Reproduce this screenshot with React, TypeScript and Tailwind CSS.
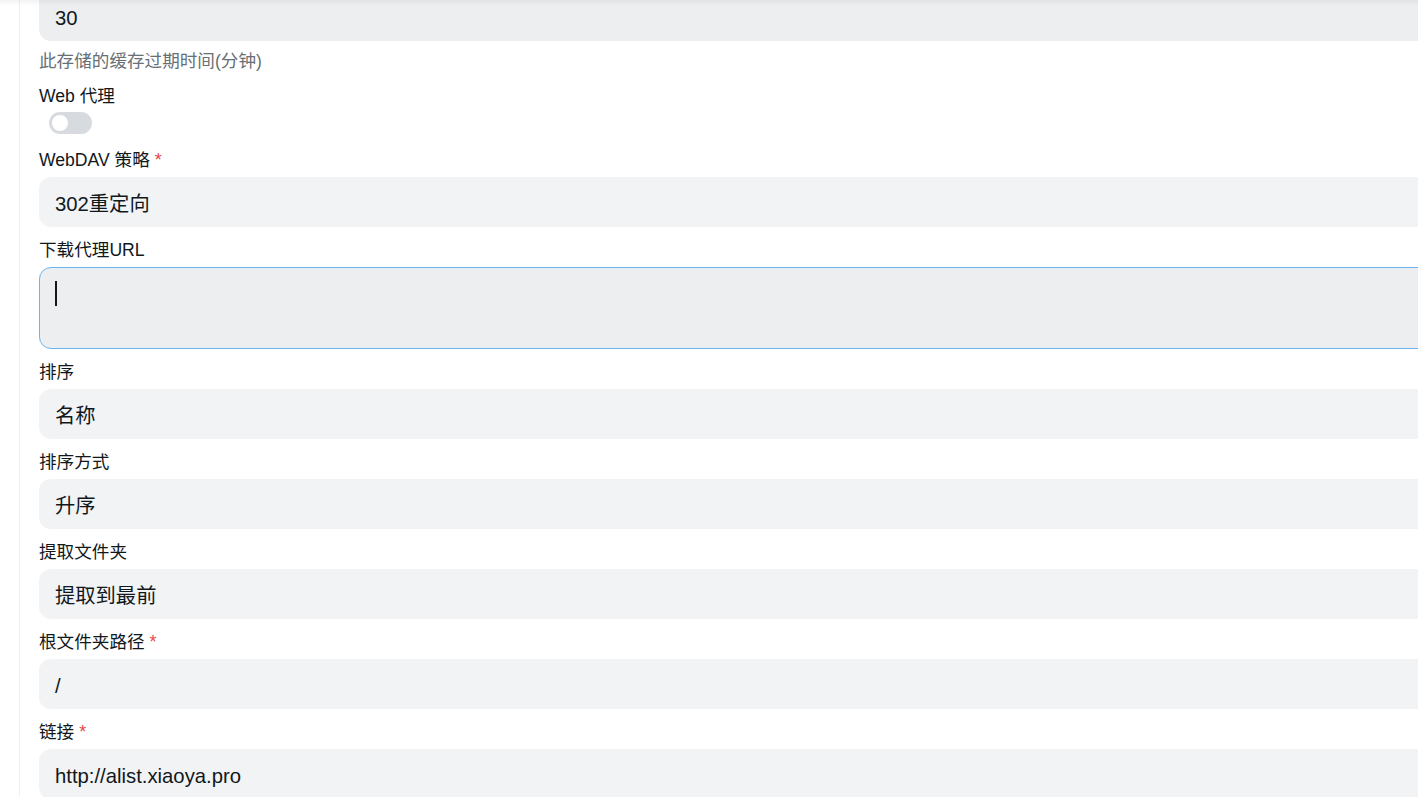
import React from 'react';

const font = { fontFamily: '"Liberation Sans", "Noto Sans CJK SC", sans-serif' };

function Label({ text, required }: { text: string; required?: boolean }) {
  return (
    <div className="text-[17.6px] leading-[26px] font-normal text-[#11181c] mb-[4px]">
      {text}
      {required && <span className="text-[#e5484d] ml-[5px] text-[18px]">*</span>}
    </div>
  );
}

function Field({ label, value, required }: { label: string; value: string; required?: boolean }) {
  return (
    <div className="mt-[10px]">
      <Label text={label} required={required} />
      <div className="h-[50px] rounded-[12px] bg-[#f1f3f5] px-[16px] pt-[4px] flex items-center text-[20.3px] text-[#11181c]">
        {value}
      </div>
    </div>
  );
}

export default function App() {
  return (
    <div className="relative h-screen overflow-hidden bg-white" style={font}>
      <div className="absolute top-0 left-0 right-0 h-[6px] bg-gradient-to-b from-black/5 to-transparent z-10" />
      <div className="flex h-full">
        <div className="w-[19px] shrink-0" />
        <div className="border-l border-[#eef0f2] pl-[19px] shrink-0">
          <div className="w-[1500px] -mt-[9px]">
            <div className="h-[50px] rounded-[12px] bg-[#eceef0] px-[16px] pt-[4px] flex items-center text-[20.3px] text-[#11181c]">
              30
            </div>
            <div className="mt-[7px] text-[17.6px] leading-[26px] text-[#687076]">此存储的缓存过期时间(分钟)</div>

            <div className="mt-[9px]">
              <Label text="Web 代理" />
              <div className="ml-[10px] mt-[-1px] w-[43px] h-[22px] rounded-full bg-[#d7dbdf] p-[3px] flex items-center">
                <div className="w-[16px] h-[16px] rounded-full bg-white" />
              </div>
            </div>

            <div className="mt-[13px]">
              <Label text="WebDAV 策略" required />
              <div className="h-[50px] rounded-[12px] bg-[#f1f3f5] px-[16px] pt-[4px] flex items-center text-[20.3px] text-[#11181c]">
                302重定向
              </div>
            </div>

            <div className="mt-[10px]">
              <Label text="下载代理URL" />
              <div className="relative h-[82px] rounded-[12px] bg-[#eceef0] border border-[#6cb3ee]">
                <div className="absolute left-[15px] top-[13px] w-[1.5px] h-[25px] bg-[#11181c]" />
              </div>
            </div>

            <div className="mt-[1px]">
              <Field label="排序" value="名称" />
            </div>
            <Field label="排序方式" value="升序" />
            <Field label="提取文件夹" value="提取到最前" />
            <Field label="根文件夹路径" value="/" required />
            <Field label="链接" value="http://alist.xiaoya.pro" required />
          </div>
        </div>
      </div>
    </div>
  );
}
